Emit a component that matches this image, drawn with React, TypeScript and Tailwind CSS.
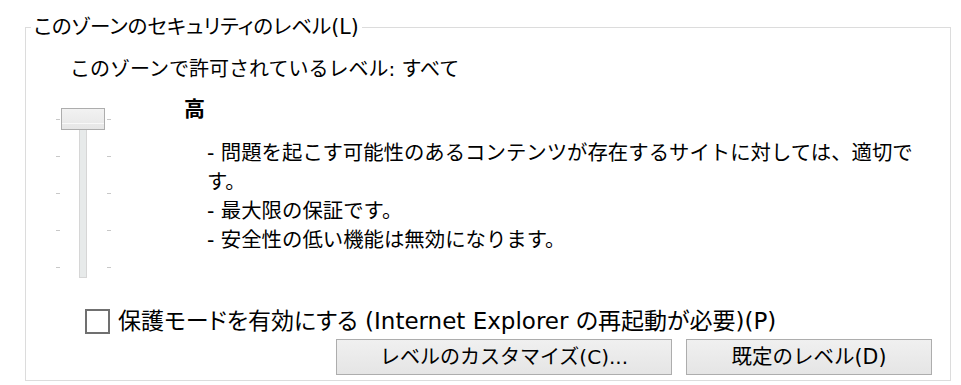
const ticks = [11, 48, 85, 122, 159];

function LevelSlider() {
  return (
    <div className="relative w-[56px] h-[171px] shrink-0">
      {ticks.map((t) => (
        <div key={t}>
          <div className="absolute left-0 w-[4px] h-px bg-[#c8c8c8]" style={{ top: t }} />
          <div className="absolute left-[51px] w-[4px] h-px bg-[#c8c8c8]" style={{ top: t }} />
        </div>
      ))}
      <div className="absolute left-[23px] top-[8px] w-[8px] h-[162px] bg-[#e7eaea] border border-[#d6d6d6]" />
      <div className="absolute left-[5px] top-0 w-[44px] h-[22px] border border-[#adadad] bg-gradient-to-b from-[#f2f2f2] to-[#e6e6e6]">
        <div className="mt-[14px] h-px bg-[#f8f8f8]" />
      </div>
    </div>
  );
}

export default function App() {
  return (
    <div className="w-[961px] h-[385px] bg-white text-black font-['DejaVu_Sans','Noto_Sans_CJK_JP',sans-serif] text-[20px] leading-[28px] overflow-hidden">
      <fieldset className="ml-[25px] mt-[13px] w-[926px] h-[368px] border border-[#dcdcdc] pl-[5px]">
        <legend className="px-[3px] leading-[28px] text-[20.5px] [font-feature-settings:'palt']">
          このゾーンのセキュリティのレベル(L)
        </legend>
        <div className="ml-[39px] mt-[14px]">このゾーンで許可されているレベル: すべて</div>

        <div className="flex items-start mt-[13px]">
          <div className="ml-[25px] mt-[12px]">
            <LevelSlider />
          </div>
          <div className="ml-[72px]">
            <div className="font-bold leading-[26px] text-[21px]">高</div>
            <div className="ml-[23px] mt-[17px] w-[730px] leading-[29px] text-[20.4px]">
              <p>- 問題を起こす可能性のあるコンテンツが存在するサイトに対しては、適切です。</p>
              <p>- 最大限の保証です。</p>
              <p>- 安全性の低い機能は無効になります。</p>
            </div>
          </div>
        </div>

        <label className="flex items-center mt-[28px] ml-[54px]">
          <span className="w-[25px] h-[25px] border-2 border-[#707070] bg-white shrink-0" />
          <span className="ml-[8px] text-[23px] [font-feature-settings:'palt']">
            保護モードを有効にする (Internet Explorer の再起動が必要)(P)
          </span>
        </label>

        <div className="flex justify-end gap-[14px] mt-[4px] mr-[18px]">
          <button className="w-[336px] h-[36px] border border-[#adadad] bg-gradient-to-b from-[#f0f0f0] to-[#e5e5e5]">
            レベルのカスタマイズ(C)...
          </button>
          <button className="w-[246px] h-[36px] border border-[#adadad] bg-gradient-to-b from-[#f0f0f0] to-[#e5e5e5] text-[20.5px]">
            既定のレベル(D)
          </button>
        </div>
      </fieldset>
    </div>
  );
}
